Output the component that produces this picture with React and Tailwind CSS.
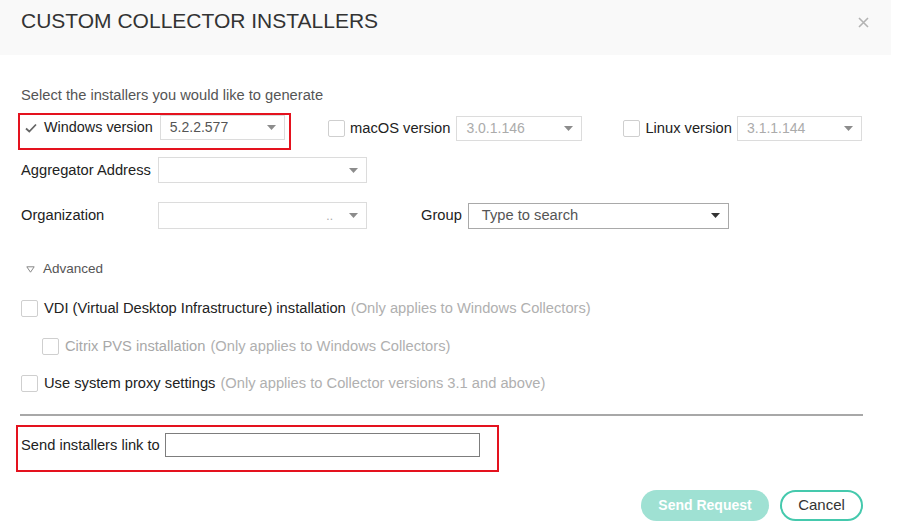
import React from 'react';

const Caret = ({ dark }) => (
  <svg width="9" height="5" viewBox="0 0 9 5" className="flex-shrink-0">
    <path d="M0 0 L9 0 L4.5 5 Z" fill={dark ? '#333' : '#8c8c8c'} />
  </svg>
);

const Select = ({ value, width, height = 25, disabled, dark, dots }) => (
  <div
    className={`flex items-center justify-between bg-white pr-[8px] border flex-shrink-0 ${dark ? 'border-[#a9a9a9] pl-[13px]' : 'border-[#dcdcdc] pl-[9px]'}`}
    style={{ width, height }}
  >
    <span className={`whitespace-nowrap ${dark ? 'text-[14.7px]' : 'text-[14px]'} ${disabled ? 'text-[#ababab]' : 'text-[#555]'}`}>{value}</span>
    <div className="flex items-center gap-[16px]">
      {dots && <span className="text-[12px] text-[#aaa] leading-none">..</span>}
      <Caret dark={dark} />
    </div>
  </div>
);

const Box = () => (
  <div className="w-[17px] h-[17px] border border-[#cfcfcf] rounded-[2px] bg-white flex-shrink-0" />
);

const CheckRow = ({ label, note, indent, muted }) => (
  <div className={`flex items-center h-[18px] whitespace-nowrap ${indent ? 'pl-[21px]' : ''}`}>
    <Box />
    <span className={`ml-[6px] text-[14.7px] ${muted ? 'text-[#a8a8a8]' : 'text-[#222]'}`}>{label}</span>
    <span className="ml-[5px] text-[14.7px] text-[#b0b0b0]">{note}</span>
  </div>
);

export default function App() {
  return (
    <div className="w-[903px] h-[527px] bg-white text-[#333] font-['Liberation_Sans',Arial,sans-serif] overflow-hidden whitespace-nowrap">
      <div className="flex items-start justify-between w-[891px] h-[55px] bg-[#f9f9f9] pl-[21px] pr-[22px]">
        <h1 className="mt-[10px] text-[21px] text-[#333] leading-none">CUSTOM COLLECTOR INSTALLERS</h1>
        <svg width="11" height="11" viewBox="0 0 11 11" className="mt-[17px]">
          <path d="M1 1 L10 10 M10 1 L1 10" stroke="#b3b3b3" strokeWidth="1.6" />
        </svg>
      </div>

      <div className="pl-[21px]">
        <p className="mt-[32px] text-[14.7px] text-[#555] leading-[17px]">Select the installers you would like to generate</p>

        <div className="flex items-start mt-[9px]">
          <div className="-ml-[3px] w-[273px] h-[37px] border-2 border-[#e4121e] flex items-start pl-[5px] flex-shrink-0">
            <div className="h-[25px] flex items-center">
              <svg width="12" height="10" viewBox="0 0 12 10">
                <path d="M1 5.5 L4.3 8.5 L11 1.5" fill="none" stroke="#666" strokeWidth="1.8" />
              </svg>
              <span className="ml-[7px] text-[14.4px] text-[#222]">Windows version</span>
            </div>
            <div className="ml-[7px]">
              <Select value="5.2.2.577" width={125} height={25} />
            </div>
          </div>
          <div className="ml-[37px] mt-[3px] flex items-center">
            <Box />
            <span className="ml-[5px] text-[14.7px] text-[#222]">macOS version</span>
            <div className="ml-[6px]">
              <Select value="3.0.1.146" width={126} height={25} disabled />
            </div>
          </div>
          <div className="ml-[41px] mt-[3px] flex items-center">
            <Box />
            <span className="ml-[5px] text-[14.7px] text-[#222]">Linux version</span>
            <div className="ml-[5px]">
              <Select value="3.1.1.144" width={125} height={25} disabled />
            </div>
          </div>
        </div>

        <div className="flex items-center mt-[7px]">
          <span className="w-[137px] text-[14.7px] text-[#222]">Aggregator Address</span>
          <Select value="" width={209} height={26} />
        </div>

        <div className="flex items-center mt-[19px]">
          <span className="w-[137px] text-[14.7px] text-[#222]">Organization</span>
          <Select value="" width={209} height={27} dots />
          <span className="ml-[54px] text-[14.7px] text-[#222]">Group</span>
          <div className="ml-[6px]">
            <Select value="Type to search" width={261} height={26} dark />
          </div>
        </div>

        <div className="flex items-center mt-[33px] pl-[5px] h-[14px]">
          <svg width="9" height="7" viewBox="0 0 9 7">
            <path d="M0.8 0.8 L8.2 0.8 L4.5 6.2 Z" fill="none" stroke="#888" strokeWidth="1" />
          </svg>
          <span className="ml-[8px] text-[13.5px] text-[#555]">Advanced</span>
        </div>

        <div className="mt-[23px]">
          <CheckRow label="VDI (Virtual Desktop Infrastructure) installation" note="(Only applies to Windows Collectors)" />
        </div>
        <div className="mt-[20px]">
          <CheckRow indent muted label="Citrix PVS installation" note="(Only applies to Windows Collectors)" />
        </div>
        <div className="mt-[19px]">
          <CheckRow label="Use system proxy settings" note="(Only applies to Collector versions 3.1 and above)" />
        </div>

        <div className="mt-[22px] -ml-[1px] w-[843px] h-[2px] bg-[#a8a8a8]" />

        <div className="mt-[9px] -ml-[5px] w-[483px] h-[47px] border-2 border-[#e4121e] pl-[3px] pt-[6px] flex items-start">
          <span className="text-[14.7px] text-[#222] leading-[24px]">Send installers link to</span>
          <div className="ml-[5px] w-[315px] h-[24px] border border-[#7d7d7d] bg-white" />
        </div>

        <div className="flex justify-end items-center gap-[11px] mt-[18px] w-[842px]">
          <button className="w-[128px] h-[31px] rounded-full bg-[#9fe1d3] text-white text-[14px] font-bold">Send Request</button>
          <button className="w-[83px] h-[31px] rounded-full border-2 border-[#45c9ad] bg-white text-[#333] text-[15px]">Cancel</button>
        </div>
      </div>
    </div>
  );
}
